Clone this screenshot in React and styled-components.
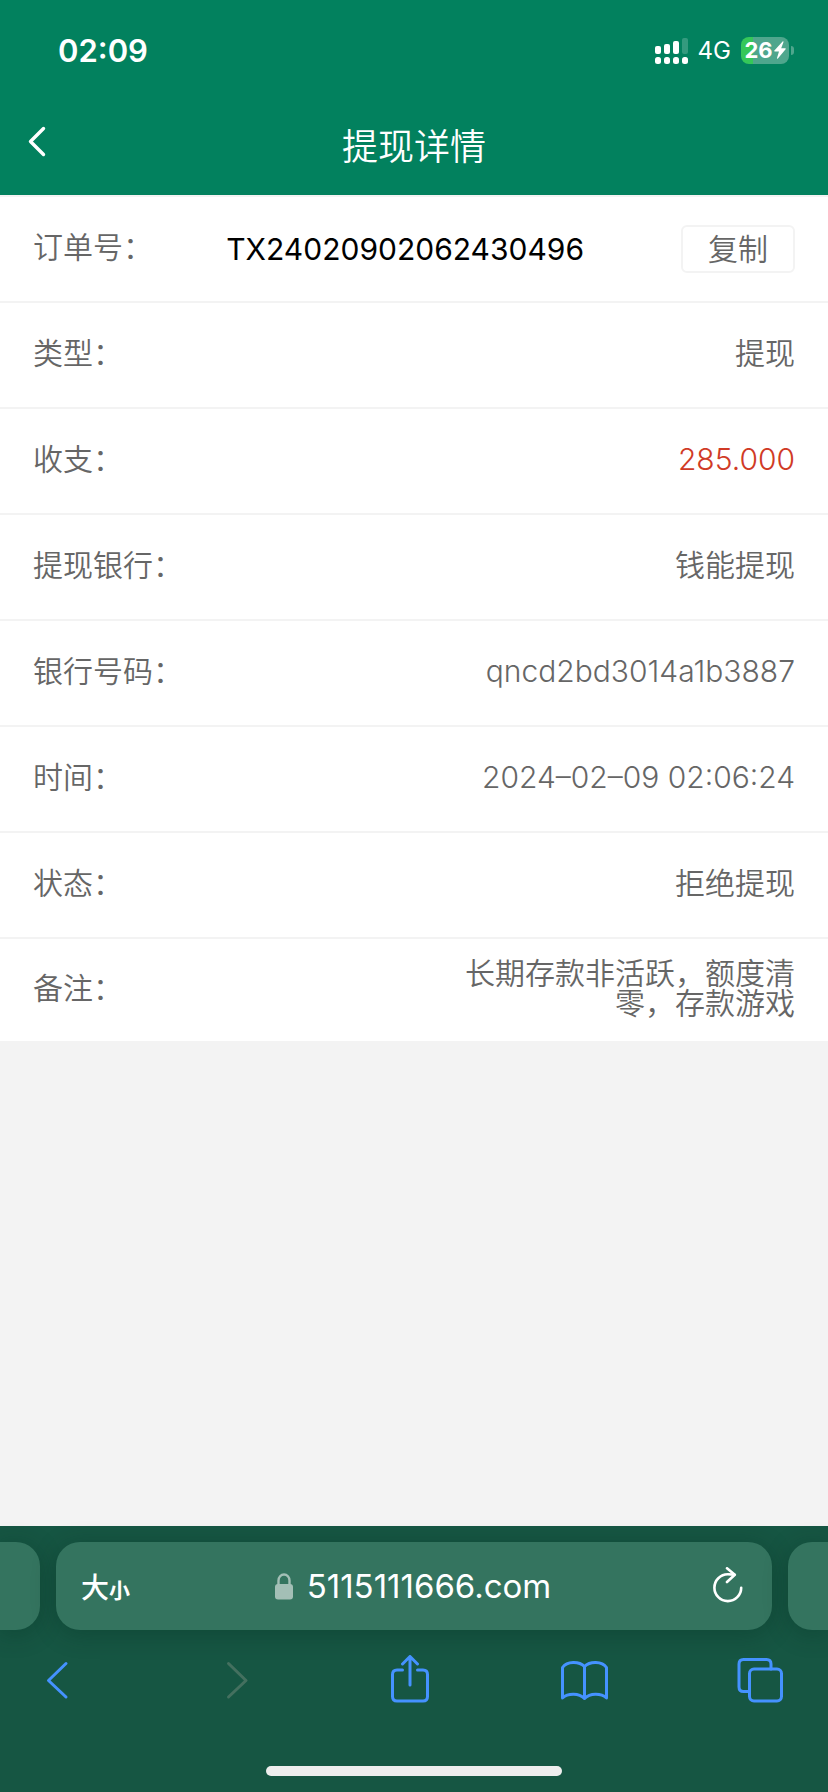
import React from 'react';
import styled, { createGlobalStyle } from 'styled-components';

const GlobalStyle = createGlobalStyle`
  * {
    box-sizing: border-box;
  }

  body {
    margin: 0;
    font-family: Inter, 'Noto Sans CJK SC', sans-serif;
    background: #f3f3f3;
  }

  button {
    padding: 0;
    border: 0;
    background: none;
    font: inherit;
    color: inherit;
  }

  svg {
    display: block;
  }
`;

const Page = styled.div`
  display: flex;
  flex-direction: column;
  min-height: 100vh;
`;

const Header = styled.header`
  background: #02815e;
  color: #fff;
`;

const StatusBar = styled.div`
  display: flex;
  align-items: center;
  justify-content: space-between;
  height: 100px;
  padding: 0 34px 0 58px;
`;

const Clock = styled.time`
  font-size: 31px;
  font-weight: 600;
`;

const StatusIcons = styled.div`
  display: flex;
  align-items: center;
  gap: 10px;
`;

const Network = styled.span`
  font-size: 24px;
`;

const Battery = styled.div`
  display: flex;
  align-items: center;
  gap: 2px;

  &::after {
    content: '';
    width: 3px;
    height: 9px;
    border-radius: 0 4px 4px 0;
    background: #4fa68d;
  }
`;

const BatteryLevel = styled.div`
  display: flex;
  align-items: center;
  justify-content: center;
  gap: 1px;
  width: 48px;
  height: 27px;
  border-radius: 8px;
  background: linear-gradient(to right, #35c759 26%, #4fa68d 26%);
  font-size: 22px;
  font-weight: 700;
`;

const NavBar = styled.div`
  display: grid;
  grid-template-columns: 60px 1fr 60px;
  align-items: center;
  height: 95px;
  padding: 0 24px 2px;
`;

const Title = styled.h1`
  margin: 0;
  font-size: 36px;
  font-weight: 350;
  line-height: 36px;
  text-align: center;
`;

const Content = styled.main`
  flex: 1;
`;

const Details = styled.dl`
  margin: 0;
  background: #fff;
`;

const Row = styled.div`
  display: flex;
  align-items: center;
  height: 106px;
  padding: 0 33px;
  border-top: 2px solid #f3f3f3;
  font-size: 30px;
  font-weight: 350;
  line-height: 30px;
  color: #666;

  &:last-child {
    height: 104px;
  }
`;

const Label = styled.dt`
  flex: 1;
  padding-bottom: 4px;
`;

const Value = styled.dd`
  max-width: 45%;
  margin: 0;
  padding-bottom: 4px;
  text-align: right;
  color: ${(props) => props.$color || 'inherit'};
`;

const OrderValue = styled.dd`
  display: flex;
  align-items: center;
  gap: 97px;
  margin: 0;
  font-weight: 400;
  color: #000;
`;

const CopyButton = styled.button`
  width: 114px;
  height: 48px;
  border: 2px solid #f3f3f3;
  border-radius: 6px;
  font-weight: 350;
  color: #666;
`;

const Browser = styled.footer`
  display: flex;
  flex-direction: column;
  align-items: center;
  padding: 16px 0;
  background: #165643;
  color: #fff;
`;

const TabStrip = styled.div`
  display: flex;
  gap: 16px;
  width: 100%;
  height: 88px;
`;

const SideTab = styled.div`
  width: 40px;
  border-radius: ${(props) => (props.$side === 'left' ? '0 24px 24px 0' : '24px 0 0 24px')};
  background: #34745f;
  box-shadow: 0 4px 24px rgba(0, 40, 25, 0.3);
`;

const AddressBar = styled.div`
  flex: 1;
  display: grid;
  grid-template-columns: 1fr auto 1fr;
  align-items: center;
  padding: 0 27px 0 25px;
  border-radius: 24px;
  background: #34745f;
  box-shadow: 0 4px 24px rgba(0, 40, 25, 0.3);
`;

const TextSize = styled.button`
  justify-self: start;
  font-size: 28px;
  font-weight: 500;

  small {
    font-size: 21px;
    font-weight: 600;
  }
`;

const Site = styled.div`
  display: flex;
  align-items: center;
  gap: 14px;
  font-size: 33px;
`;

const Reload = styled.button`
  justify-self: end;
`;

const Toolbar = styled.nav`
  display: flex;
  justify-content: space-between;
  width: 100%;
  margin: 25px 0 61px;
  padding: 0 45px 0 37px;
  color: #4592ff;

  button:disabled {
    color: #44705f;
  }
`;

const HomeIndicator = styled.div`
  width: 296px;
  height: 10px;
  border-radius: 5px;
  background: #eee;
`;

const SignalIcon = () => (
  <svg width="33" height="27" viewBox="0 0 33 27" fill="currentColor">
    <rect x="0" y="9" width="6" height="8" rx="2" />
    <rect x="9" y="7" width="6" height="10" rx="2" />
    <rect x="18" y="4" width="6" height="13" rx="2" />
    <rect x="27" y="1" width="6" height="16" rx="2" opacity="0.2" />
    <rect x="0" y="20" width="6" height="7" rx="2.5" />
    <rect x="9" y="20" width="6" height="7" rx="2.5" />
    <rect x="18" y="20" width="6" height="7" rx="2.5" />
    <rect x="27" y="20" width="6" height="7" rx="2.5" />
  </svg>
);

const BoltIcon = () => (
  <svg width="12" height="18" viewBox="0 0 12 18" fill="currentColor">
    <path d="M8.6 0.4 0.4 9.6c-.4.5-.2 1 .4 1H5L3 17c-.2.7.4 1 .9.5L11.6 8.3c.4-.5.2-1-.4-1H7.2L9.5 1c.2-.7-.4-1.1-.9-.6Z" />
  </svg>
);

const LockIcon = () => (
  <svg width="18" height="27" viewBox="0 0 18 27" fill="none">
    <path d="M3.5 12V7.5a5.5 6 0 0 1 11 0V12" stroke="#a3bfb6" strokeWidth="2.4" />
    <rect y="11" width="18" height="15.5" rx="3" fill="#a3bfb6" />
  </svg>
);

const ReloadIcon = () => (
  <svg
    width="32"
    height="38"
    viewBox="0 0 32 38"
    fill="none"
    stroke="currentColor"
    strokeWidth="2.6"
    strokeLinecap="round"
    strokeLinejoin="round"
  >
    <path d="M28.2 20.7a13.4 13.4 0 1 1-13.4-13.4c2 0 4 .1 6.5.3" />
    <path d="M14 1.3 21.8 7.7 14 15" />
  </svg>
);

const ToolIcon = ({ children }) => (
  <svg
    width="50"
    height="50"
    viewBox="0 0 50 50"
    fill="none"
    stroke="currentColor"
    strokeWidth="3"
    strokeLinecap="round"
    strokeLinejoin="round"
  >
    {children}
  </svg>
);

const rows = [
  { label: '类型：', value: '提现' },
  { label: '收支：', value: '285.000', color: '#d03a26' },
  { label: '提现银行：', value: '钱能提现' },
  { label: '银行号码：', value: 'qncd2bd3014a1b3887' },
  { label: '时间：', value: '2024–02–09 02:06:24' },
  { label: '状态：', value: '拒绝提现' },
  { label: '备注：', value: '长期存款非活跃，额度清零，存款游戏' }
];

export default function App() {
  return (
    <Page lang="zh-CN">
      <GlobalStyle />
      <Header>
        <StatusBar>
          <Clock>02:09</Clock>
          <StatusIcons>
            <SignalIcon />
            <Network>4G</Network>
            <Battery>
              <BatteryLevel>
                26
                <BoltIcon />
              </BatteryLevel>
            </Battery>
          </StatusIcons>
        </StatusBar>
        <NavBar>
          <button aria-label="返回">
            <svg width="24" height="44" viewBox="0 0 24 44" fill="none">
              <path
                d="M19.5 3.5 6.5 16.5l13 13"
                stroke="currentColor"
                strokeWidth="3.4"
                strokeLinecap="round"
                strokeLinejoin="round"
              />
            </svg>
          </button>
          <Title>提现详情</Title>
        </NavBar>
      </Header>

      <Content>
        <Details>
          <Row>
            <Label>订单号：</Label>
            <OrderValue>
              TX24020902062430496
              <CopyButton>复制</CopyButton>
            </OrderValue>
          </Row>
          {rows.map((row) => (
            <Row key={row.label}>
              <Label>{row.label}</Label>
              <Value $color={row.color}>{row.value}</Value>
            </Row>
          ))}
        </Details>
      </Content>

      <Browser>
        <TabStrip>
          <SideTab $side="left" />
          <AddressBar>
            <TextSize>
              大<small>小</small>
            </TextSize>
            <Site>
              <LockIcon />
              5115111666.com
            </Site>
            <Reload aria-label="重新载入">
              <ReloadIcon />
            </Reload>
          </AddressBar>
          <SideTab $side="right" />
        </TabStrip>
        <Toolbar>
          <button aria-label="后退">
            <ToolIcon>
              <path d="M29 8.5 11.5 25.5 29 42" />
            </ToolIcon>
          </button>
          <button aria-label="前进" disabled>
            <ToolIcon>
              <path d="M17.5 8.5 35 25.5 17.5 42" />
            </ToolIcon>
          </button>
          <button aria-label="共享">
            <ToolIcon>
              <path d="M17.5 15H12q-4.5 0-4.5 4.5v22q0 4.5 4.5 4.5h26q4.5 0 4.5-4.5v-22q0-4.5-4.5-4.5h-5.5" />
              <path d="M25 30V2M17.5 9 25 1.5 32.5 9" />
            </ToolIcon>
          </button>
          <button aria-label="书签">
            <ToolIcon>
              <path d="M25.5 11.5C20 6 8 6 3.5 12.5V43C9 38 20 38 25.5 43.5 31 38 42 38 47.5 43V12.5C43 6 31 6 25.5 11.5Z" />
              <path d="M25.5 11.5V43" />
            </ToolIcon>
          </button>
          <button aria-label="标签页">
            <ToolIcon>
              <rect x="16.5" y="14" width="32" height="32" rx="4.5" />
              <path d="M16 36.5H10.5Q6 36.5 6 32V9Q6 4.5 10.5 4.5H33.5Q38 4.5 38 9V14" />
            </ToolIcon>
          </button>
        </Toolbar>
        <HomeIndicator />
      </Browser>
    </Page>
  );
}
